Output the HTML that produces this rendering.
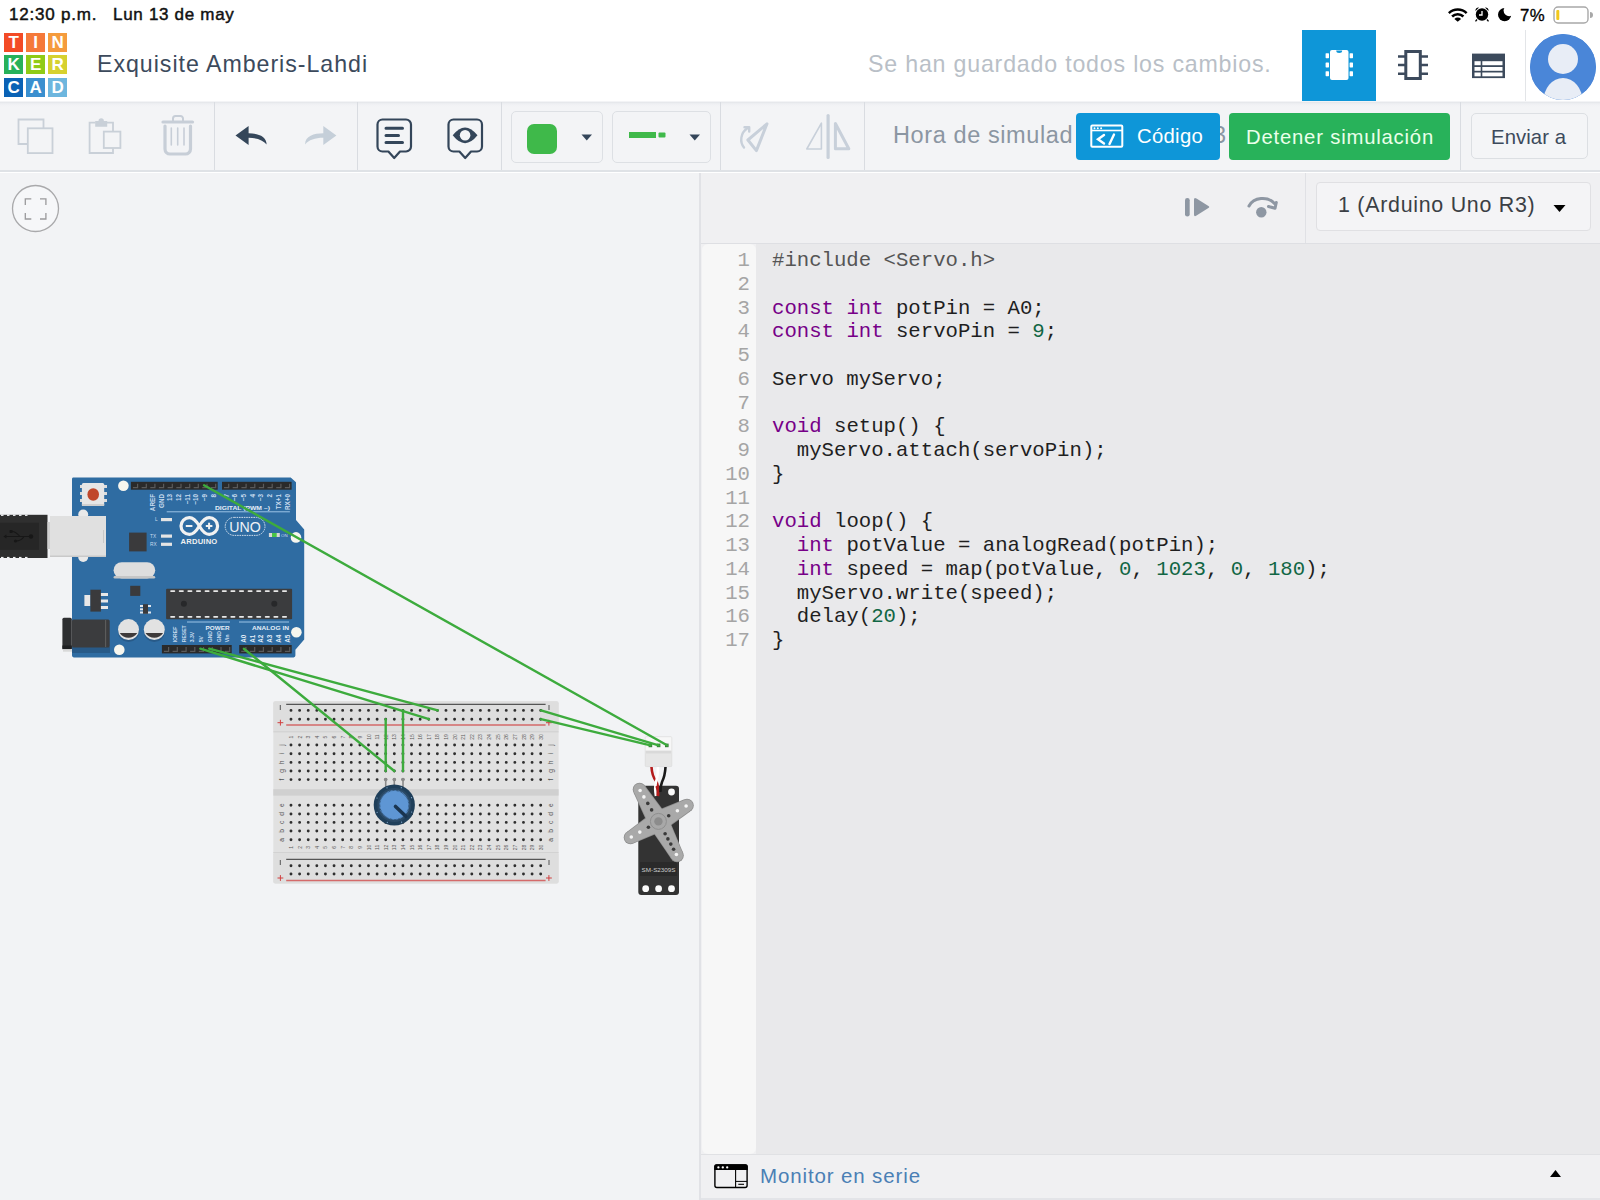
<!DOCTYPE html>
<html><head><meta charset="utf-8">
<style>
*{margin:0;padding:0;box-sizing:border-box}
html,body{width:1600px;height:1200px;overflow:hidden;background:#fff;font-family:"Liberation Sans",sans-serif}
.abs{position:absolute}
.t{line-height:1;white-space:pre}
#status{left:0;top:0;width:1600px;height:30px;background:#fff}
#header{left:0;top:30px;width:1600px;height:71px;background:#fff}
#toolbar{left:0;top:101px;width:1600px;height:70px;background:linear-gradient(#e3e5e9 0px,#eceef1 1.5px,#f1f2f5 3px,#f3f4f6 5px);border-top:1px solid transparent}
#tbline{left:0;top:170px;width:1600px;height:2px;background:#dfe2e6;border-bottom:1px solid #fff}
#tbline{height:3px}
#canvas{left:0;top:173px;width:700px;height:1028px;background:#f2f3f5}
#panel{left:699px;top:173px;width:901px;height:1028px;background:#f0f0f2;border-left:2px solid #e1e2e6}
.sep{position:absolute;width:1.3px;background:#d9dce1}
.logo{position:absolute;width:19.3px;height:19.3px;color:#fff;font-weight:bold;font-size:17px;line-height:19.3px;text-align:center}
.code{font-family:"Liberation Mono",monospace;font-size:20.67px;line-height:23.75px;color:#1f1f1f;white-space:pre}
.kw{color:#770088}
.num{color:#116644}
.meta{color:#555}
</style></head><body>
<div id="status" class="abs">
  <div class="abs t" id="st1" style="left:9px;top:6px;font-size:17px;color:#111;-webkit-text-stroke:0.45px #111;letter-spacing:0.8px">12:30 p.m.</div><div class="abs t" id="st2" style="left:113px;top:6px;font-size:17px;color:#111;-webkit-text-stroke:0.45px #111;letter-spacing:0.7px">Lun 13 de may</div>
</div>
<div id="header" class="abs">
  <div class="logo" style="left:4px;top:3px;background:#f34b26">T</div>
  <div class="logo" style="left:26px;top:3px;background:#f5793a">I</div>
  <div class="logo" style="left:48px;top:3px;background:#f59b3d">N</div>
  <div class="logo" style="left:4px;top:25px;background:#27b15a">K</div>
  <div class="logo" style="left:26px;top:25px;background:#8fcb16">E</div>
  <div class="logo" style="left:48px;top:25px;background:#d6d12f">R</div>
  <div class="logo" style="left:4px;top:48px;background:#0a62b5">C</div>
  <div class="logo" style="left:26px;top:48px;background:#3a8fcf">A</div>
  <div class="logo" style="left:48px;top:48px;background:#6db6de">D</div>
  <div class="abs t" style="left:97px;top:23px;font-size:23.2px;color:#3c4a5c;letter-spacing:0.97px">Exquisite Amberis-Lahdi</div>
  <div class="abs t" style="left:868px;top:23px;font-size:23.2px;color:#b9bfc7;letter-spacing:0.8px">Se han guardado todos los cambios.</div>
  <div class="abs" style="left:1302px;top:0;width:74px;height:71px;background:#0e96d8"></div>
  <div class="sep" style="left:1525px;top:0;height:71px;background:#e3e5e8"></div>
  <div class="abs" style="left:1530px;top:4px;width:66px;height:66px;border-radius:50%;background:#4a86d8"></div>
</div>
<div id="toolbar" class="abs">
  <div class="sep" style="left:214px;top:0;height:69px"></div>
  <div class="sep" style="left:357px;top:0;height:69px"></div>
  <div class="sep" style="left:501px;top:0;height:69px"></div>
  <div class="sep" style="left:720px;top:0;height:69px"></div>
  <div class="sep" style="left:864px;top:0;height:69px"></div>
  <div class="sep" style="left:1460px;top:0;height:69px"></div>
  <div class="abs" style="left:511px;top:9px;width:92px;height:52px;border:1px solid #dde0e4;border-radius:5px"></div>
  <div class="abs" style="left:612px;top:9px;width:99px;height:52px;border:1px solid #dde0e4;border-radius:5px"></div>
  <div class="abs" style="left:527px;top:22px;width:30px;height:30px;border-radius:7px;background:#3fb94a"></div>
  <div class="abs t" style="left:893px;top:22px;font-size:23.5px;color:#8b96a2;letter-spacing:0.6px">Hora de simulad</div>
  <div class="abs t" style="left:1213px;top:22px;font-size:23.5px;color:#8b96a2">3</div>
  <div class="abs" style="left:1075.5px;top:10.5px;width:144px;height:47px;border-radius:4px;background:#0e96d8"></div>
  <div class="abs t" style="left:1137px;top:24px;font-size:20.3px;color:#fff;letter-spacing:0.3px">Código</div>
  <div class="abs" style="left:1229px;top:11px;width:221px;height:46.5px;border-radius:4px;background:#28b25a"></div>
  <div class="abs t" style="left:1246px;top:24.5px;font-size:20.3px;color:#eaffea;letter-spacing:0.8px">Detener simulación</div>
  <div class="abs" style="left:1470.5px;top:11.2px;width:117.5px;height:46.3px;border-radius:5px;border:1px solid #dcdfe3;background:#f4f5f7"></div>
  <div class="abs t" style="left:1491px;top:24.5px;font-size:20.3px;color:#3c4a5c;letter-spacing:0.1px">Enviar a</div>
</div>
<div id="tbline" class="abs"></div>
<div id="canvas" class="abs">
</div>
<!--CIRCUIT--><svg class="abs" style="left:0;top:0" width="700" height="1200" viewBox="0 0 700 1200">
<path d="M73,477.4 H290.7 L296,482.2 V519.9 L304.2,529.5 V639.4 L295.4,649.7 V655.6 Q295.4,657.4 293.6,657.4 H73.8 Q72,657.4 72,655.6 V479 Q72,477.4 73,477.4 Z" fill="#2f6ca2"/>
<rect x="0" y="514.8" width="47.5" height="43.2" fill="#2f2f2f"/>
<rect x="1" y="514.6" width="2.5" height="1.3" fill="#f2f3f5"/>
<rect x="1" y="556.9" width="2.5" height="1.3" fill="#f2f3f5"/>
<rect x="7" y="514.6" width="2.5" height="1.3" fill="#f2f3f5"/>
<rect x="7" y="556.9" width="2.5" height="1.3" fill="#f2f3f5"/>
<rect x="13" y="514.6" width="2.5" height="1.3" fill="#f2f3f5"/>
<rect x="13" y="556.9" width="2.5" height="1.3" fill="#f2f3f5"/>
<rect x="19" y="514.6" width="2.5" height="1.3" fill="#f2f3f5"/>
<rect x="19" y="556.9" width="2.5" height="1.3" fill="#f2f3f5"/>
<rect x="25" y="514.6" width="2.5" height="1.3" fill="#f2f3f5"/>
<rect x="25" y="556.9" width="2.5" height="1.3" fill="#f2f3f5"/>
<rect x="0" y="522.8" width="39" height="27" fill="#262626"/>
<path d="M4,536.5 H31 M20,536.5 C17,533 15,531.5 12,531.5 M24,536.5 C22,540 19,541 15.5,541" stroke="#171717" stroke-width="1.1" fill="none"/>
<path d="M3.3,536.5 L6.5,534.6 V538.4 Z" fill="#171717"/><circle cx="31" cy="536.5" r="2.2" fill="#171717"/><rect x="9.5" y="529.9" width="3.2" height="3.2" rx="0.8" fill="#171717"/><circle cx="15.5" cy="541" r="1.6" fill="#171717"/>
<rect x="47.5" y="522" width="2.5" height="27" fill="#d0d0d0"/>
<circle cx="83.2" cy="514.6" r="5" fill="#e9e9e9"/><circle cx="83.2" cy="557" r="5" fill="#e9e9e9"/>
<rect x="50" y="516" width="56" height="41" fill="#e0e0e0"/>
<rect x="50" y="555.5" width="56" height="1.5" fill="#c9c9c9"/>
<rect x="103" y="530" width="1" height="13" fill="#c8c8c8"/>
<rect x="80" y="485" width="27" height="3" fill="#dcdcdc"/><rect x="80" y="492" width="27" height="3" fill="#dcdcdc"/><rect x="80" y="499" width="27" height="3" fill="#dcdcdc"/>
<rect x="81.9" y="483.1" width="22.3" height="22.8" rx="1.5" fill="#e6e6e6"/>
<rect x="81.9" y="504" width="22.3" height="2" fill="#cfcfcf"/>
<ellipse cx="93.2" cy="494.5" rx="5.8" ry="6.2" fill="#c0472a"/>
<circle cx="123.4" cy="485.8" r="5.3" fill="#f7f6ee"/>
<circle cx="296" cy="537.4" r="5.3" fill="#f7f6ee"/>
<circle cx="296.4" cy="632.3" r="5.3" fill="#f7f6ee"/>
<circle cx="119.3" cy="649.7" r="5.3" fill="#f7f6ee"/>
<rect x="130.9" y="481.8" width="86.79999999999998" height="7.899999999999977" fill="#2a2a2a"/>
<path d="M132.9,487.7 H137.6 V483.8" stroke="#5a5a5a" stroke-width="1.2" fill="none"/>
<path d="M141.6,487.7 H146.3 V483.8" stroke="#5a5a5a" stroke-width="1.2" fill="none"/>
<path d="M150.3,487.7 H154.9 V483.8" stroke="#5a5a5a" stroke-width="1.2" fill="none"/>
<path d="M158.9,487.7 H163.6 V483.8" stroke="#5a5a5a" stroke-width="1.2" fill="none"/>
<path d="M167.6,487.7 H172.3 V483.8" stroke="#5a5a5a" stroke-width="1.2" fill="none"/>
<path d="M176.3,487.7 H181.0 V483.8" stroke="#5a5a5a" stroke-width="1.2" fill="none"/>
<path d="M185.0,487.7 H189.7 V483.8" stroke="#5a5a5a" stroke-width="1.2" fill="none"/>
<path d="M193.7,487.7 H198.3 V483.8" stroke="#5a5a5a" stroke-width="1.2" fill="none"/>
<path d="M202.3,487.7 H207.0 V483.8" stroke="#5a5a5a" stroke-width="1.2" fill="none"/>
<path d="M211.0,487.7 H215.7 V483.8" stroke="#5a5a5a" stroke-width="1.2" fill="none"/>
<rect x="222" y="481.8" width="69.60000000000002" height="7.899999999999977" fill="#2a2a2a"/>
<path d="M224.0,487.7 H228.7 V483.8" stroke="#5a5a5a" stroke-width="1.2" fill="none"/>
<path d="M232.7,487.7 H237.4 V483.8" stroke="#5a5a5a" stroke-width="1.2" fill="none"/>
<path d="M241.4,487.7 H246.1 V483.8" stroke="#5a5a5a" stroke-width="1.2" fill="none"/>
<path d="M250.1,487.7 H254.8 V483.8" stroke="#5a5a5a" stroke-width="1.2" fill="none"/>
<path d="M258.8,487.7 H263.5 V483.8" stroke="#5a5a5a" stroke-width="1.2" fill="none"/>
<path d="M267.5,487.7 H272.2 V483.8" stroke="#5a5a5a" stroke-width="1.2" fill="none"/>
<path d="M276.2,487.7 H280.9 V483.8" stroke="#5a5a5a" stroke-width="1.2" fill="none"/>
<path d="M284.9,487.7 H289.6 V483.8" stroke="#5a5a5a" stroke-width="1.2" fill="none"/>
<rect x="161.9" y="645" width="69.79999999999998" height="8.399999999999977" fill="#2a2a2a"/>
<path d="M163.9,651.4 H168.6 V647.0" stroke="#5a5a5a" stroke-width="1.2" fill="none"/>
<path d="M172.6,651.4 H177.3 V647.0" stroke="#5a5a5a" stroke-width="1.2" fill="none"/>
<path d="M181.3,651.4 H186.1 V647.0" stroke="#5a5a5a" stroke-width="1.2" fill="none"/>
<path d="M190.1,651.4 H194.8 V647.0" stroke="#5a5a5a" stroke-width="1.2" fill="none"/>
<path d="M198.8,651.4 H203.5 V647.0" stroke="#5a5a5a" stroke-width="1.2" fill="none"/>
<path d="M207.5,651.4 H212.2 V647.0" stroke="#5a5a5a" stroke-width="1.2" fill="none"/>
<path d="M216.2,651.4 H221.0 V647.0" stroke="#5a5a5a" stroke-width="1.2" fill="none"/>
<path d="M225.0,651.4 H229.7 V647.0" stroke="#5a5a5a" stroke-width="1.2" fill="none"/>
<rect x="239.2" y="645" width="52.5" height="8.399999999999977" fill="#2a2a2a"/>
<path d="M241.2,651.4 H245.9 V647.0" stroke="#5a5a5a" stroke-width="1.2" fill="none"/>
<path d="M249.9,651.4 H254.7 V647.0" stroke="#5a5a5a" stroke-width="1.2" fill="none"/>
<path d="M258.7,651.4 H263.4 V647.0" stroke="#5a5a5a" stroke-width="1.2" fill="none"/>
<path d="M267.4,651.4 H272.2 V647.0" stroke="#5a5a5a" stroke-width="1.2" fill="none"/>
<path d="M276.2,651.4 H280.9 V647.0" stroke="#5a5a5a" stroke-width="1.2" fill="none"/>
<path d="M284.9,651.4 H289.7 V647.0" stroke="#5a5a5a" stroke-width="1.2" fill="none"/>
<path d="M166.7,511.8 H289.9" stroke="#9cc3e6" stroke-width="1"/>
<path d="M187,622 H230 M239,622 H289" stroke="#9cc3e6" stroke-width="1"/>
<text transform="translate(154.84,494) rotate(-90)" font-size="6.3" font-family="Liberation Sans" font-weight="bold" fill="#c9dcef" text-anchor="end">AREF</text>
<text transform="translate(163.51,494) rotate(-90)" font-size="6.3" font-family="Liberation Sans" font-weight="bold" fill="#c9dcef" text-anchor="end">GND</text>
<text transform="translate(172.18,494) rotate(-90)" font-size="6.3" font-family="Liberation Sans" font-weight="bold" fill="#c9dcef" text-anchor="end">13</text>
<text transform="translate(180.85,494) rotate(-90)" font-size="6.3" font-family="Liberation Sans" font-weight="bold" fill="#c9dcef" text-anchor="end">12</text>
<text transform="translate(189.51999999999998,494) rotate(-90)" font-size="6.3" font-family="Liberation Sans" font-weight="bold" fill="#c9dcef" text-anchor="end">~11</text>
<text transform="translate(198.19,494) rotate(-90)" font-size="6.3" font-family="Liberation Sans" font-weight="bold" fill="#c9dcef" text-anchor="end">~10</text>
<text transform="translate(206.86,494) rotate(-90)" font-size="6.3" font-family="Liberation Sans" font-weight="bold" fill="#c9dcef" text-anchor="end">~9</text>
<text transform="translate(215.53,494) rotate(-90)" font-size="6.3" font-family="Liberation Sans" font-weight="bold" fill="#c9dcef" text-anchor="end">8</text>
<text transform="translate(228.60000000000002,494) rotate(-90)" font-size="6.3" font-family="Liberation Sans" font-weight="bold" fill="#c9dcef" text-anchor="end">7</text>
<text transform="translate(237.3,494) rotate(-90)" font-size="6.3" font-family="Liberation Sans" font-weight="bold" fill="#c9dcef" text-anchor="end">~6</text>
<text transform="translate(246.00000000000003,494) rotate(-90)" font-size="6.3" font-family="Liberation Sans" font-weight="bold" fill="#c9dcef" text-anchor="end">~5</text>
<text transform="translate(254.70000000000002,494) rotate(-90)" font-size="6.3" font-family="Liberation Sans" font-weight="bold" fill="#c9dcef" text-anchor="end">4</text>
<text transform="translate(263.40000000000003,494) rotate(-90)" font-size="6.3" font-family="Liberation Sans" font-weight="bold" fill="#c9dcef" text-anchor="end">~3</text>
<text transform="translate(272.1,494) rotate(-90)" font-size="6.3" font-family="Liberation Sans" font-weight="bold" fill="#c9dcef" text-anchor="end">2</text>
<text transform="translate(280.8,494) rotate(-90)" font-size="6.3" font-family="Liberation Sans" font-weight="bold" fill="#c9dcef" text-anchor="end">TX+1</text>
<text transform="translate(289.5,494) rotate(-90)" font-size="6.3" font-family="Liberation Sans" font-weight="bold" fill="#c9dcef" text-anchor="end">RX+0</text>
<text x="215" y="509.5" font-size="6.2" font-family="Liberation Sans" font-weight="bold" fill="#e4eef8" textLength="55" lengthAdjust="spacingAndGlyphs">DIGITAL (PWM ~)</text>
<text x="205.6" y="629.8" font-size="5.8" font-family="Liberation Sans" font-weight="bold" fill="#e4eef8" textLength="24" lengthAdjust="spacingAndGlyphs">POWER</text>
<text x="252" y="629.8" font-size="5.8" font-family="Liberation Sans" font-weight="bold" fill="#e4eef8" textLength="37" lengthAdjust="spacingAndGlyphs">ANALOG IN</text>
<text transform="translate(177.02,642.3) rotate(-90)" font-size="5.1" font-family="Liberation Sans" font-weight="bold" fill="#c9dcef">IOREF</text>
<text transform="translate(185.74,642.3) rotate(-90)" font-size="5.1" font-family="Liberation Sans" font-weight="bold" fill="#c9dcef">RESET</text>
<text transform="translate(194.46,642.3) rotate(-90)" font-size="5.1" font-family="Liberation Sans" font-weight="bold" fill="#c9dcef">3.3V</text>
<text transform="translate(203.18,642.3) rotate(-90)" font-size="5.1" font-family="Liberation Sans" font-weight="bold" fill="#c9dcef">5V</text>
<text transform="translate(211.9,642.3) rotate(-90)" font-size="5.1" font-family="Liberation Sans" font-weight="bold" fill="#c9dcef">GND</text>
<text transform="translate(220.62,642.3) rotate(-90)" font-size="5.1" font-family="Liberation Sans" font-weight="bold" fill="#c9dcef">GND</text>
<text transform="translate(229.34000000000003,642.3) rotate(-90)" font-size="5.1" font-family="Liberation Sans" font-weight="bold" fill="#c9dcef">Vin</text>
<text transform="translate(246.0,642.8) rotate(-90)" font-size="6.3" font-family="Liberation Sans" font-weight="bold" fill="#e4eef8">A0</text>
<text transform="translate(254.7,642.8) rotate(-90)" font-size="6.3" font-family="Liberation Sans" font-weight="bold" fill="#e4eef8">A1</text>
<text transform="translate(263.4,642.8) rotate(-90)" font-size="6.3" font-family="Liberation Sans" font-weight="bold" fill="#e4eef8">A2</text>
<text transform="translate(272.09999999999997,642.8) rotate(-90)" font-size="6.3" font-family="Liberation Sans" font-weight="bold" fill="#e4eef8">A3</text>
<text transform="translate(280.79999999999995,642.8) rotate(-90)" font-size="6.3" font-family="Liberation Sans" font-weight="bold" fill="#e4eef8">A4</text>
<text transform="translate(289.5,642.8) rotate(-90)" font-size="6.3" font-family="Liberation Sans" font-weight="bold" fill="#e4eef8">A5</text>
<rect x="161" y="518" width="11" height="3.2" fill="#e4e4e4"/>
<text x="155" y="521.3" font-size="4.8" font-family="Liberation Sans" fill="#c9dcef">L</text>
<rect x="161" y="534.5" width="11" height="3.2" fill="#e4e4e4"/>
<text x="150" y="537.8" font-size="4.8" font-family="Liberation Sans" fill="#c9dcef">TX</text>
<rect x="161" y="542.7" width="11" height="3.2" fill="#e4e4e4"/>
<text x="150" y="546.0" font-size="4.8" font-family="Liberation Sans" fill="#c9dcef">RX</text>
<rect x="268.9" y="533" width="10.9" height="4" fill="#d8d8d8"/><rect x="272" y="533" width="4.7" height="4" fill="#48c548"/>
<text x="281" y="537" font-size="4.4" font-family="Liberation Sans" fill="#c9dcef">ON</text>
<rect x="129.1" y="532.6" width="17.5" height="18.8" fill="#3a3a3c"/>
<rect x="130.2" y="585.8" width="10.1" height="10.1" fill="#3a3a3c"/>
<rect x="113.6" y="562.2" width="41.6" height="16.2" rx="8.1" fill="#dedede"/>
<rect x="113.6" y="576" width="41.6" height="2.4" rx="1.2" fill="#c6c6c6"/>
<rect x="84.4" y="595" width="6" height="11" fill="#e8e8e8"/>
<rect x="100" y="593" width="8" height="3" fill="#e8e8e8"/><rect x="100" y="599.5" width="8" height="3" fill="#e8e8e8"/><rect x="100" y="606" width="8" height="3" fill="#e8e8e8"/>
<rect x="90.4" y="589.7" width="10.5" height="21.9" fill="#3a3a3c"/>
<rect x="140" y="605" width="11" height="2" fill="#e0e6ee"/><rect x="140" y="608.3" width="3" height="2" fill="#e0e6ee"/><rect x="140" y="611.5" width="11" height="2" fill="#e0e6ee"/>
<rect x="143" y="604.2" width="5" height="9.6" fill="#3a3a3c"/>
<rect x="166.1" y="588.7" width="126" height="30.5" rx="1" fill="#3b3c3e"/>
<rect x="170.2" y="590.3" width="5" height="1.7" rx="0.8" fill="#e8e8e8"/>
<rect x="170.2" y="616" width="5" height="1.7" rx="0.8" fill="#e8e8e8"/>
<rect x="178.8" y="590.3" width="5" height="1.7" rx="0.8" fill="#e8e8e8"/>
<rect x="178.8" y="616" width="5" height="1.7" rx="0.8" fill="#e8e8e8"/>
<rect x="187.4" y="590.3" width="5" height="1.7" rx="0.8" fill="#e8e8e8"/>
<rect x="187.4" y="616" width="5" height="1.7" rx="0.8" fill="#e8e8e8"/>
<rect x="196.0" y="590.3" width="5" height="1.7" rx="0.8" fill="#e8e8e8"/>
<rect x="196.0" y="616" width="5" height="1.7" rx="0.8" fill="#e8e8e8"/>
<rect x="204.6" y="590.3" width="5" height="1.7" rx="0.8" fill="#e8e8e8"/>
<rect x="204.6" y="616" width="5" height="1.7" rx="0.8" fill="#e8e8e8"/>
<rect x="213.2" y="590.3" width="5" height="1.7" rx="0.8" fill="#e8e8e8"/>
<rect x="213.2" y="616" width="5" height="1.7" rx="0.8" fill="#e8e8e8"/>
<rect x="221.8" y="590.3" width="5" height="1.7" rx="0.8" fill="#e8e8e8"/>
<rect x="221.8" y="616" width="5" height="1.7" rx="0.8" fill="#e8e8e8"/>
<rect x="230.4" y="590.3" width="5" height="1.7" rx="0.8" fill="#e8e8e8"/>
<rect x="230.4" y="616" width="5" height="1.7" rx="0.8" fill="#e8e8e8"/>
<rect x="239.0" y="590.3" width="5" height="1.7" rx="0.8" fill="#e8e8e8"/>
<rect x="239.0" y="616" width="5" height="1.7" rx="0.8" fill="#e8e8e8"/>
<rect x="247.6" y="590.3" width="5" height="1.7" rx="0.8" fill="#e8e8e8"/>
<rect x="247.6" y="616" width="5" height="1.7" rx="0.8" fill="#e8e8e8"/>
<rect x="256.2" y="590.3" width="5" height="1.7" rx="0.8" fill="#e8e8e8"/>
<rect x="256.2" y="616" width="5" height="1.7" rx="0.8" fill="#e8e8e8"/>
<rect x="264.8" y="590.3" width="5" height="1.7" rx="0.8" fill="#e8e8e8"/>
<rect x="264.8" y="616" width="5" height="1.7" rx="0.8" fill="#e8e8e8"/>
<rect x="273.4" y="590.3" width="5" height="1.7" rx="0.8" fill="#e8e8e8"/>
<rect x="273.4" y="616" width="5" height="1.7" rx="0.8" fill="#e8e8e8"/>
<rect x="282.0" y="590.3" width="5" height="1.7" rx="0.8" fill="#e8e8e8"/>
<rect x="282.0" y="616" width="5" height="1.7" rx="0.8" fill="#e8e8e8"/>
<circle cx="183.9" cy="603.7" r="3" fill="#27282a"/><circle cx="274.3" cy="603.7" r="3" fill="#27282a"/>
<rect x="72" y="647" width="38" height="6" fill="#285a88"/>
<rect x="72" y="619.5" width="37.7" height="28" rx="1.5" fill="#3b3c3e"/>
<rect x="105.3" y="620" width="0.8" height="27" fill="#6a6a6a"/>
<rect x="62.4" y="617.7" width="9.4" height="31.5" rx="1.5" fill="#2e2f31"/>
<rect x="62.4" y="645.5" width="9.4" height="3.7" fill="#1f2022"/>
<rect x="63" y="649.2" width="9" height="2.5" fill="#d9d9d9"/>
<circle cx="128.5" cy="631.5" r="10.5" fill="#285a88"/>
<circle cx="128.5" cy="629.6" r="10.5" fill="#e2e2e2"/>
<path d="M119.7,633 H137.3 A10.5,10.5 0 0 1 119.7,633 Z" fill="#3e3a3a"/>
<circle cx="154.3" cy="631.5" r="10.5" fill="#285a88"/>
<circle cx="154.3" cy="629.6" r="10.5" fill="#e2e2e2"/>
<path d="M145.5,633 H163.10000000000002 A10.5,10.5 0 0 1 145.5,633 Z" fill="#3e3a3a"/>
<g fill="none" stroke="#f2f2f2" stroke-width="3.2">
<path d="M199.3,526 C195.5,519.5 191.5,517.6 189.4,517.6 A8.4,8.4 0 0 0 189.4,534.4 C191.5,534.4 195.5,532.5 199.3,526 C203.1,519.5 207.1,517.6 209.2,517.6 A8.4,8.4 0 0 1 209.2,534.4 C207.1,534.4 203.1,532.5 199.3,526 Z"/>
</g>
<path d="M185.8,526 H192.4 M205.8,526 H212.4 M209.1,522.7 V529.3" stroke="#f2f2f2" stroke-width="2"/>
<text x="180.6" y="544" font-size="7.6" font-family="Liberation Sans" font-weight="bold" fill="#f0f0f0" letter-spacing="0.2">ARDUINO</text>
<rect x="225.2" y="517.4" width="39.8" height="18" rx="9" fill="none" stroke="#dfe8f2" stroke-width="0.9" stroke-dasharray="1.6,0.8"/>
<text x="229.3" y="532.4" font-size="14.2" font-family="Liberation Sans" fill="#eef2f6" textLength="31.5" lengthAdjust="spacingAndGlyphs">UNO</text>
<rect x="273.3" y="701.2" width="285.3" height="182.39999999999998" rx="2" fill="#e1e1e1"/>
<rect x="273.3" y="701.2" width="285.3" height="30.5" rx="2" fill="#dedede"/>
<rect x="273.3" y="731.2" width="285.3" height="1.2" fill="#d2d2d2"/>
<rect x="273.3" y="789.2" width="285.3" height="6.4" fill="#d0d0d0"/>
<rect x="273.3" y="852.4" width="285.3" height="31.2" rx="2" fill="#dedede"/>
<rect x="273.3" y="852" width="285.3" height="1" fill="#d2d2d2"/>
<path d="M286.2,704.3 H545.6 M286.2,859.3 H545.6" stroke="#555" stroke-width="1.2"/>
<path d="M286.2,725 H545.6 M286.2,880.4 H545.6" stroke="#d46a6a" stroke-width="1.5"/>
<path d="M280.3,705 V710 M549,705 V710 M280.3,860 V865 M549,860 V865" stroke="#555" stroke-width="1"/>
<path d="M277.5,722.7 H283.3 M280.4,719.8 V725.6 M546,722.7 H551.8 M548.9,719.8 V725.6 M277.5,878 H283.3 M280.4,875.1 V880.9 M546,878 H551.8 M548.9,875.1 V880.9" stroke="#d04040" stroke-width="1"/>
<path d="M291.00,710.4h0M299.61,710.4h0M308.22,710.4h0M316.83,710.4h0M325.44,710.4h0M334.05,710.4h0M342.66,710.4h0M351.27,710.4h0M359.88,710.4h0M368.49,710.4h0M377.10,710.4h0M385.71,710.4h0M394.32,710.4h0M402.93,710.4h0M411.54,710.4h0M420.15,710.4h0M428.76,710.4h0M437.37,710.4h0M445.98,710.4h0M454.59,710.4h0M463.20,710.4h0M471.81,710.4h0M480.42,710.4h0M489.03,710.4h0M497.64,710.4h0M506.25,710.4h0M514.86,710.4h0M523.47,710.4h0M532.08,710.4h0M540.69,710.4h0M291.00,719.2h0M299.61,719.2h0M308.22,719.2h0M316.83,719.2h0M325.44,719.2h0M334.05,719.2h0M342.66,719.2h0M351.27,719.2h0M359.88,719.2h0M368.49,719.2h0M377.10,719.2h0M385.71,719.2h0M394.32,719.2h0M402.93,719.2h0M411.54,719.2h0M420.15,719.2h0M428.76,719.2h0M437.37,719.2h0M445.98,719.2h0M454.59,719.2h0M463.20,719.2h0M471.81,719.2h0M480.42,719.2h0M489.03,719.2h0M497.64,719.2h0M506.25,719.2h0M514.86,719.2h0M523.47,719.2h0M532.08,719.2h0M540.69,719.2h0M291.00,745h0M299.61,745h0M308.22,745h0M316.83,745h0M325.44,745h0M334.05,745h0M342.66,745h0M351.27,745h0M359.88,745h0M368.49,745h0M377.10,745h0M385.71,745h0M394.32,745h0M402.93,745h0M411.54,745h0M420.15,745h0M428.76,745h0M437.37,745h0M445.98,745h0M454.59,745h0M463.20,745h0M471.81,745h0M480.42,745h0M489.03,745h0M497.64,745h0M506.25,745h0M514.86,745h0M523.47,745h0M532.08,745h0M540.69,745h0M291.00,753.7h0M299.61,753.7h0M308.22,753.7h0M316.83,753.7h0M325.44,753.7h0M334.05,753.7h0M342.66,753.7h0M351.27,753.7h0M359.88,753.7h0M368.49,753.7h0M377.10,753.7h0M385.71,753.7h0M394.32,753.7h0M402.93,753.7h0M411.54,753.7h0M420.15,753.7h0M428.76,753.7h0M437.37,753.7h0M445.98,753.7h0M454.59,753.7h0M463.20,753.7h0M471.81,753.7h0M480.42,753.7h0M489.03,753.7h0M497.64,753.7h0M506.25,753.7h0M514.86,753.7h0M523.47,753.7h0M532.08,753.7h0M540.69,753.7h0M291.00,762.4h0M299.61,762.4h0M308.22,762.4h0M316.83,762.4h0M325.44,762.4h0M334.05,762.4h0M342.66,762.4h0M351.27,762.4h0M359.88,762.4h0M368.49,762.4h0M377.10,762.4h0M385.71,762.4h0M394.32,762.4h0M402.93,762.4h0M411.54,762.4h0M420.15,762.4h0M428.76,762.4h0M437.37,762.4h0M445.98,762.4h0M454.59,762.4h0M463.20,762.4h0M471.81,762.4h0M480.42,762.4h0M489.03,762.4h0M497.64,762.4h0M506.25,762.4h0M514.86,762.4h0M523.47,762.4h0M532.08,762.4h0M540.69,762.4h0M291.00,771h0M299.61,771h0M308.22,771h0M316.83,771h0M325.44,771h0M334.05,771h0M342.66,771h0M351.27,771h0M359.88,771h0M368.49,771h0M377.10,771h0M385.71,771h0M394.32,771h0M402.93,771h0M411.54,771h0M420.15,771h0M428.76,771h0M437.37,771h0M445.98,771h0M454.59,771h0M463.20,771h0M471.81,771h0M480.42,771h0M489.03,771h0M497.64,771h0M506.25,771h0M514.86,771h0M523.47,771h0M532.08,771h0M540.69,771h0M291.00,779.6h0M299.61,779.6h0M308.22,779.6h0M316.83,779.6h0M325.44,779.6h0M334.05,779.6h0M342.66,779.6h0M351.27,779.6h0M359.88,779.6h0M368.49,779.6h0M377.10,779.6h0M385.71,779.6h0M394.32,779.6h0M402.93,779.6h0M411.54,779.6h0M420.15,779.6h0M428.76,779.6h0M437.37,779.6h0M445.98,779.6h0M454.59,779.6h0M463.20,779.6h0M471.81,779.6h0M480.42,779.6h0M489.03,779.6h0M497.64,779.6h0M506.25,779.6h0M514.86,779.6h0M523.47,779.6h0M532.08,779.6h0M540.69,779.6h0M291.00,805.2h0M299.61,805.2h0M308.22,805.2h0M316.83,805.2h0M325.44,805.2h0M334.05,805.2h0M342.66,805.2h0M351.27,805.2h0M359.88,805.2h0M368.49,805.2h0M377.10,805.2h0M385.71,805.2h0M394.32,805.2h0M402.93,805.2h0M411.54,805.2h0M420.15,805.2h0M428.76,805.2h0M437.37,805.2h0M445.98,805.2h0M454.59,805.2h0M463.20,805.2h0M471.81,805.2h0M480.42,805.2h0M489.03,805.2h0M497.64,805.2h0M506.25,805.2h0M514.86,805.2h0M523.47,805.2h0M532.08,805.2h0M540.69,805.2h0M291.00,814h0M299.61,814h0M308.22,814h0M316.83,814h0M325.44,814h0M334.05,814h0M342.66,814h0M351.27,814h0M359.88,814h0M368.49,814h0M377.10,814h0M385.71,814h0M394.32,814h0M402.93,814h0M411.54,814h0M420.15,814h0M428.76,814h0M437.37,814h0M445.98,814h0M454.59,814h0M463.20,814h0M471.81,814h0M480.42,814h0M489.03,814h0M497.64,814h0M506.25,814h0M514.86,814h0M523.47,814h0M532.08,814h0M540.69,814h0M291.00,822.4h0M299.61,822.4h0M308.22,822.4h0M316.83,822.4h0M325.44,822.4h0M334.05,822.4h0M342.66,822.4h0M351.27,822.4h0M359.88,822.4h0M368.49,822.4h0M377.10,822.4h0M385.71,822.4h0M394.32,822.4h0M402.93,822.4h0M411.54,822.4h0M420.15,822.4h0M428.76,822.4h0M437.37,822.4h0M445.98,822.4h0M454.59,822.4h0M463.20,822.4h0M471.81,822.4h0M480.42,822.4h0M489.03,822.4h0M497.64,822.4h0M506.25,822.4h0M514.86,822.4h0M523.47,822.4h0M532.08,822.4h0M540.69,822.4h0M291.00,831h0M299.61,831h0M308.22,831h0M316.83,831h0M325.44,831h0M334.05,831h0M342.66,831h0M351.27,831h0M359.88,831h0M368.49,831h0M377.10,831h0M385.71,831h0M394.32,831h0M402.93,831h0M411.54,831h0M420.15,831h0M428.76,831h0M437.37,831h0M445.98,831h0M454.59,831h0M463.20,831h0M471.81,831h0M480.42,831h0M489.03,831h0M497.64,831h0M506.25,831h0M514.86,831h0M523.47,831h0M532.08,831h0M540.69,831h0M291.00,839.8h0M299.61,839.8h0M308.22,839.8h0M316.83,839.8h0M325.44,839.8h0M334.05,839.8h0M342.66,839.8h0M351.27,839.8h0M359.88,839.8h0M368.49,839.8h0M377.10,839.8h0M385.71,839.8h0M394.32,839.8h0M402.93,839.8h0M411.54,839.8h0M420.15,839.8h0M428.76,839.8h0M437.37,839.8h0M445.98,839.8h0M454.59,839.8h0M463.20,839.8h0M471.81,839.8h0M480.42,839.8h0M489.03,839.8h0M497.64,839.8h0M506.25,839.8h0M514.86,839.8h0M523.47,839.8h0M532.08,839.8h0M540.69,839.8h0M291.00,865.7h0M299.61,865.7h0M308.22,865.7h0M316.83,865.7h0M325.44,865.7h0M334.05,865.7h0M342.66,865.7h0M351.27,865.7h0M359.88,865.7h0M368.49,865.7h0M377.10,865.7h0M385.71,865.7h0M394.32,865.7h0M402.93,865.7h0M411.54,865.7h0M420.15,865.7h0M428.76,865.7h0M437.37,865.7h0M445.98,865.7h0M454.59,865.7h0M463.20,865.7h0M471.81,865.7h0M480.42,865.7h0M489.03,865.7h0M497.64,865.7h0M506.25,865.7h0M514.86,865.7h0M523.47,865.7h0M532.08,865.7h0M540.69,865.7h0M291.00,874h0M299.61,874h0M308.22,874h0M316.83,874h0M325.44,874h0M334.05,874h0M342.66,874h0M351.27,874h0M359.88,874h0M368.49,874h0M377.10,874h0M385.71,874h0M394.32,874h0M402.93,874h0M411.54,874h0M420.15,874h0M428.76,874h0M437.37,874h0M445.98,874h0M454.59,874h0M463.20,874h0M471.81,874h0M480.42,874h0M489.03,874h0M497.64,874h0M506.25,874h0M514.86,874h0M523.47,874h0M532.08,874h0M540.69,874h0" stroke="#2e2e2e" stroke-width="2.9" stroke-linecap="round"/>
<text transform="translate(291.0,737) rotate(-90)" font-size="5" font-family="Liberation Sans" fill="#5a5a5a" text-anchor="middle" dominant-baseline="central">1</text>
<text transform="translate(291.0,847.4) rotate(-90)" font-size="5" font-family="Liberation Sans" fill="#5a5a5a" text-anchor="middle" dominant-baseline="central">1</text>
<text transform="translate(299.6,737) rotate(-90)" font-size="5" font-family="Liberation Sans" fill="#5a5a5a" text-anchor="middle" dominant-baseline="central">2</text>
<text transform="translate(299.6,847.4) rotate(-90)" font-size="5" font-family="Liberation Sans" fill="#5a5a5a" text-anchor="middle" dominant-baseline="central">2</text>
<text transform="translate(308.2,737) rotate(-90)" font-size="5" font-family="Liberation Sans" fill="#5a5a5a" text-anchor="middle" dominant-baseline="central">3</text>
<text transform="translate(308.2,847.4) rotate(-90)" font-size="5" font-family="Liberation Sans" fill="#5a5a5a" text-anchor="middle" dominant-baseline="central">3</text>
<text transform="translate(316.8,737) rotate(-90)" font-size="5" font-family="Liberation Sans" fill="#5a5a5a" text-anchor="middle" dominant-baseline="central">4</text>
<text transform="translate(316.8,847.4) rotate(-90)" font-size="5" font-family="Liberation Sans" fill="#5a5a5a" text-anchor="middle" dominant-baseline="central">4</text>
<text transform="translate(325.4,737) rotate(-90)" font-size="5" font-family="Liberation Sans" fill="#5a5a5a" text-anchor="middle" dominant-baseline="central">5</text>
<text transform="translate(325.4,847.4) rotate(-90)" font-size="5" font-family="Liberation Sans" fill="#5a5a5a" text-anchor="middle" dominant-baseline="central">5</text>
<text transform="translate(334.1,737) rotate(-90)" font-size="5" font-family="Liberation Sans" fill="#5a5a5a" text-anchor="middle" dominant-baseline="central">6</text>
<text transform="translate(334.1,847.4) rotate(-90)" font-size="5" font-family="Liberation Sans" fill="#5a5a5a" text-anchor="middle" dominant-baseline="central">6</text>
<text transform="translate(342.7,737) rotate(-90)" font-size="5" font-family="Liberation Sans" fill="#5a5a5a" text-anchor="middle" dominant-baseline="central">7</text>
<text transform="translate(342.7,847.4) rotate(-90)" font-size="5" font-family="Liberation Sans" fill="#5a5a5a" text-anchor="middle" dominant-baseline="central">7</text>
<text transform="translate(351.3,737) rotate(-90)" font-size="5" font-family="Liberation Sans" fill="#5a5a5a" text-anchor="middle" dominant-baseline="central">8</text>
<text transform="translate(351.3,847.4) rotate(-90)" font-size="5" font-family="Liberation Sans" fill="#5a5a5a" text-anchor="middle" dominant-baseline="central">8</text>
<text transform="translate(359.9,737) rotate(-90)" font-size="5" font-family="Liberation Sans" fill="#5a5a5a" text-anchor="middle" dominant-baseline="central">9</text>
<text transform="translate(359.9,847.4) rotate(-90)" font-size="5" font-family="Liberation Sans" fill="#5a5a5a" text-anchor="middle" dominant-baseline="central">9</text>
<text transform="translate(368.5,737) rotate(-90)" font-size="5" font-family="Liberation Sans" fill="#5a5a5a" text-anchor="middle" dominant-baseline="central">10</text>
<text transform="translate(368.5,847.4) rotate(-90)" font-size="5" font-family="Liberation Sans" fill="#5a5a5a" text-anchor="middle" dominant-baseline="central">10</text>
<text transform="translate(377.1,737) rotate(-90)" font-size="5" font-family="Liberation Sans" fill="#5a5a5a" text-anchor="middle" dominant-baseline="central">11</text>
<text transform="translate(377.1,847.4) rotate(-90)" font-size="5" font-family="Liberation Sans" fill="#5a5a5a" text-anchor="middle" dominant-baseline="central">11</text>
<text transform="translate(385.7,737) rotate(-90)" font-size="5" font-family="Liberation Sans" fill="#5a5a5a" text-anchor="middle" dominant-baseline="central">12</text>
<text transform="translate(385.7,847.4) rotate(-90)" font-size="5" font-family="Liberation Sans" fill="#5a5a5a" text-anchor="middle" dominant-baseline="central">12</text>
<text transform="translate(394.3,737) rotate(-90)" font-size="5" font-family="Liberation Sans" fill="#5a5a5a" text-anchor="middle" dominant-baseline="central">13</text>
<text transform="translate(394.3,847.4) rotate(-90)" font-size="5" font-family="Liberation Sans" fill="#5a5a5a" text-anchor="middle" dominant-baseline="central">13</text>
<text transform="translate(402.9,737) rotate(-90)" font-size="5" font-family="Liberation Sans" fill="#5a5a5a" text-anchor="middle" dominant-baseline="central">14</text>
<text transform="translate(402.9,847.4) rotate(-90)" font-size="5" font-family="Liberation Sans" fill="#5a5a5a" text-anchor="middle" dominant-baseline="central">14</text>
<text transform="translate(411.5,737) rotate(-90)" font-size="5" font-family="Liberation Sans" fill="#5a5a5a" text-anchor="middle" dominant-baseline="central">15</text>
<text transform="translate(411.5,847.4) rotate(-90)" font-size="5" font-family="Liberation Sans" fill="#5a5a5a" text-anchor="middle" dominant-baseline="central">15</text>
<text transform="translate(420.1,737) rotate(-90)" font-size="5" font-family="Liberation Sans" fill="#5a5a5a" text-anchor="middle" dominant-baseline="central">16</text>
<text transform="translate(420.1,847.4) rotate(-90)" font-size="5" font-family="Liberation Sans" fill="#5a5a5a" text-anchor="middle" dominant-baseline="central">16</text>
<text transform="translate(428.8,737) rotate(-90)" font-size="5" font-family="Liberation Sans" fill="#5a5a5a" text-anchor="middle" dominant-baseline="central">17</text>
<text transform="translate(428.8,847.4) rotate(-90)" font-size="5" font-family="Liberation Sans" fill="#5a5a5a" text-anchor="middle" dominant-baseline="central">17</text>
<text transform="translate(437.4,737) rotate(-90)" font-size="5" font-family="Liberation Sans" fill="#5a5a5a" text-anchor="middle" dominant-baseline="central">18</text>
<text transform="translate(437.4,847.4) rotate(-90)" font-size="5" font-family="Liberation Sans" fill="#5a5a5a" text-anchor="middle" dominant-baseline="central">18</text>
<text transform="translate(446.0,737) rotate(-90)" font-size="5" font-family="Liberation Sans" fill="#5a5a5a" text-anchor="middle" dominant-baseline="central">19</text>
<text transform="translate(446.0,847.4) rotate(-90)" font-size="5" font-family="Liberation Sans" fill="#5a5a5a" text-anchor="middle" dominant-baseline="central">19</text>
<text transform="translate(454.6,737) rotate(-90)" font-size="5" font-family="Liberation Sans" fill="#5a5a5a" text-anchor="middle" dominant-baseline="central">20</text>
<text transform="translate(454.6,847.4) rotate(-90)" font-size="5" font-family="Liberation Sans" fill="#5a5a5a" text-anchor="middle" dominant-baseline="central">20</text>
<text transform="translate(463.2,737) rotate(-90)" font-size="5" font-family="Liberation Sans" fill="#5a5a5a" text-anchor="middle" dominant-baseline="central">21</text>
<text transform="translate(463.2,847.4) rotate(-90)" font-size="5" font-family="Liberation Sans" fill="#5a5a5a" text-anchor="middle" dominant-baseline="central">21</text>
<text transform="translate(471.8,737) rotate(-90)" font-size="5" font-family="Liberation Sans" fill="#5a5a5a" text-anchor="middle" dominant-baseline="central">22</text>
<text transform="translate(471.8,847.4) rotate(-90)" font-size="5" font-family="Liberation Sans" fill="#5a5a5a" text-anchor="middle" dominant-baseline="central">22</text>
<text transform="translate(480.4,737) rotate(-90)" font-size="5" font-family="Liberation Sans" fill="#5a5a5a" text-anchor="middle" dominant-baseline="central">23</text>
<text transform="translate(480.4,847.4) rotate(-90)" font-size="5" font-family="Liberation Sans" fill="#5a5a5a" text-anchor="middle" dominant-baseline="central">23</text>
<text transform="translate(489.0,737) rotate(-90)" font-size="5" font-family="Liberation Sans" fill="#5a5a5a" text-anchor="middle" dominant-baseline="central">24</text>
<text transform="translate(489.0,847.4) rotate(-90)" font-size="5" font-family="Liberation Sans" fill="#5a5a5a" text-anchor="middle" dominant-baseline="central">24</text>
<text transform="translate(497.6,737) rotate(-90)" font-size="5" font-family="Liberation Sans" fill="#5a5a5a" text-anchor="middle" dominant-baseline="central">25</text>
<text transform="translate(497.6,847.4) rotate(-90)" font-size="5" font-family="Liberation Sans" fill="#5a5a5a" text-anchor="middle" dominant-baseline="central">25</text>
<text transform="translate(506.2,737) rotate(-90)" font-size="5" font-family="Liberation Sans" fill="#5a5a5a" text-anchor="middle" dominant-baseline="central">26</text>
<text transform="translate(506.2,847.4) rotate(-90)" font-size="5" font-family="Liberation Sans" fill="#5a5a5a" text-anchor="middle" dominant-baseline="central">26</text>
<text transform="translate(514.9,737) rotate(-90)" font-size="5" font-family="Liberation Sans" fill="#5a5a5a" text-anchor="middle" dominant-baseline="central">27</text>
<text transform="translate(514.9,847.4) rotate(-90)" font-size="5" font-family="Liberation Sans" fill="#5a5a5a" text-anchor="middle" dominant-baseline="central">27</text>
<text transform="translate(523.5,737) rotate(-90)" font-size="5" font-family="Liberation Sans" fill="#5a5a5a" text-anchor="middle" dominant-baseline="central">28</text>
<text transform="translate(523.5,847.4) rotate(-90)" font-size="5" font-family="Liberation Sans" fill="#5a5a5a" text-anchor="middle" dominant-baseline="central">28</text>
<text transform="translate(532.1,737) rotate(-90)" font-size="5" font-family="Liberation Sans" fill="#5a5a5a" text-anchor="middle" dominant-baseline="central">29</text>
<text transform="translate(532.1,847.4) rotate(-90)" font-size="5" font-family="Liberation Sans" fill="#5a5a5a" text-anchor="middle" dominant-baseline="central">29</text>
<text transform="translate(540.7,737) rotate(-90)" font-size="5" font-family="Liberation Sans" fill="#5a5a5a" text-anchor="middle" dominant-baseline="central">30</text>
<text transform="translate(540.7,847.4) rotate(-90)" font-size="5" font-family="Liberation Sans" fill="#5a5a5a" text-anchor="middle" dominant-baseline="central">30</text>
<text transform="translate(281.7,745) rotate(-90)" font-size="6.6" font-family="Liberation Sans" fill="#555" text-anchor="middle" dominant-baseline="central">j</text>
<text transform="translate(550.5,745) rotate(-90)" font-size="6.6" font-family="Liberation Sans" fill="#555" text-anchor="middle" dominant-baseline="central">j</text>
<text transform="translate(281.7,753.7) rotate(-90)" font-size="6.6" font-family="Liberation Sans" fill="#555" text-anchor="middle" dominant-baseline="central">i</text>
<text transform="translate(550.5,753.7) rotate(-90)" font-size="6.6" font-family="Liberation Sans" fill="#555" text-anchor="middle" dominant-baseline="central">i</text>
<text transform="translate(281.7,762.4) rotate(-90)" font-size="6.6" font-family="Liberation Sans" fill="#555" text-anchor="middle" dominant-baseline="central">h</text>
<text transform="translate(550.5,762.4) rotate(-90)" font-size="6.6" font-family="Liberation Sans" fill="#555" text-anchor="middle" dominant-baseline="central">h</text>
<text transform="translate(281.7,771) rotate(-90)" font-size="6.6" font-family="Liberation Sans" fill="#555" text-anchor="middle" dominant-baseline="central">g</text>
<text transform="translate(550.5,771) rotate(-90)" font-size="6.6" font-family="Liberation Sans" fill="#555" text-anchor="middle" dominant-baseline="central">g</text>
<text transform="translate(281.7,779.6) rotate(-90)" font-size="6.6" font-family="Liberation Sans" fill="#555" text-anchor="middle" dominant-baseline="central">f</text>
<text transform="translate(550.5,779.6) rotate(-90)" font-size="6.6" font-family="Liberation Sans" fill="#555" text-anchor="middle" dominant-baseline="central">f</text>
<text transform="translate(281.7,805.2) rotate(-90)" font-size="6.6" font-family="Liberation Sans" fill="#555" text-anchor="middle" dominant-baseline="central">e</text>
<text transform="translate(550.5,805.2) rotate(-90)" font-size="6.6" font-family="Liberation Sans" fill="#555" text-anchor="middle" dominant-baseline="central">e</text>
<text transform="translate(281.7,814) rotate(-90)" font-size="6.6" font-family="Liberation Sans" fill="#555" text-anchor="middle" dominant-baseline="central">d</text>
<text transform="translate(550.5,814) rotate(-90)" font-size="6.6" font-family="Liberation Sans" fill="#555" text-anchor="middle" dominant-baseline="central">d</text>
<text transform="translate(281.7,822.4) rotate(-90)" font-size="6.6" font-family="Liberation Sans" fill="#555" text-anchor="middle" dominant-baseline="central">c</text>
<text transform="translate(550.5,822.4) rotate(-90)" font-size="6.6" font-family="Liberation Sans" fill="#555" text-anchor="middle" dominant-baseline="central">c</text>
<text transform="translate(281.7,831) rotate(-90)" font-size="6.6" font-family="Liberation Sans" fill="#555" text-anchor="middle" dominant-baseline="central">b</text>
<text transform="translate(550.5,831) rotate(-90)" font-size="6.6" font-family="Liberation Sans" fill="#555" text-anchor="middle" dominant-baseline="central">b</text>
<text transform="translate(281.7,839.8) rotate(-90)" font-size="6.6" font-family="Liberation Sans" fill="#555" text-anchor="middle" dominant-baseline="central">a</text>
<text transform="translate(550.5,839.8) rotate(-90)" font-size="6.6" font-family="Liberation Sans" fill="#555" text-anchor="middle" dominant-baseline="central">a</text>
<path d="M385.7,779 V787 M394.3,779 V787 M403,779 V787" stroke="#8a8a8a" stroke-width="1.6"/>
<circle cx="385.7" cy="779.6" r="1.8" fill="#8a8a8a"/><circle cx="394.3" cy="779.6" r="1.8" fill="#8a8a8a"/><circle cx="403" cy="779.6" r="1.8" fill="#8a8a8a"/>
<circle cx="394.3" cy="805" r="20.6" fill="#1f3f5a"/>
<circle cx="394.3" cy="805" r="17" fill="#2b4a66"/>
<circle cx="394.3" cy="805" r="15" fill="#5e96d4"/><circle cx="394.3" cy="805" r="14.6" fill="none" stroke="#2a4a6a" stroke-width="1.2" stroke-dasharray="0.7,0.7"/>
<path d="M395.5,806.5 L405.8,816.3" stroke="#1a3550" stroke-width="3.6" stroke-linecap="round"/>
<circle cx="411.6" cy="812.0" r="0.6" fill="#8fb4d8"/>
<circle cx="401.6" cy="822.2" r="0.6" fill="#8fb4d8"/>
<circle cx="387.3" cy="822.3" r="0.6" fill="#8fb4d8"/>
<circle cx="377.1" cy="812.3" r="0.6" fill="#8fb4d8"/>
<circle cx="377.0" cy="798.0" r="0.6" fill="#8fb4d8"/>
<circle cx="387.0" cy="787.8" r="0.6" fill="#8fb4d8"/>
<circle cx="401.3" cy="787.7" r="0.6" fill="#8fb4d8"/>
<circle cx="411.5" cy="797.7" r="0.6" fill="#8fb4d8"/>
<rect x="645.2" y="736.8" width="26.6" height="29.8" rx="1" fill="#e6e6e6" stroke="#d6d6d6" stroke-width="0.6"/>
<rect x="645.6" y="737.2" width="25.8" height="13.5" fill="#f7f7f7"/>
<rect x="646" y="750.7" width="25" height="2.8" fill="#d9d9d9"/>
<rect x="648.6" y="743.6" width="3.6" height="3.6" fill="#3a7a3a"/><rect x="656.8" y="743.6" width="3.6" height="3.6" fill="#3a7a3a"/><rect x="665" y="743.6" width="3.6" height="3.6" fill="#3a7a3a"/>
<rect x="638.3" y="785.7" width="40.7" height="109.3" rx="3" fill="#333333"/>
<path d="M651.5,767 Q652,776 656,781 Q659,786 658,796" stroke="#b51d1d" stroke-width="2.6" fill="none"/>
<path d="M658,767 Q658,776 656,782 Q654.5,788 656,796" stroke="#ffffff" stroke-width="2.6" fill="none"/>
<path d="M665.5,767 Q665,776 662,782 Q660,787 660.5,792" stroke="#1a1a1a" stroke-width="2.6" fill="none"/>
<path d="M656.5,786 Q658.5,790 657.5,796" stroke="#b51d1d" stroke-width="2.4" fill="none"/>
<rect x="640" y="862" width="37" height="14" fill="#2a2a2a"/>
<text x="658.6" y="872" font-size="6.2" font-family="Liberation Sans" fill="#cfcfcf" text-anchor="middle" textLength="34" lengthAdjust="spacingAndGlyphs">SM-S2309S</text>
<circle cx="645.7" cy="888.7" r="3.4" fill="#fafafa"/>
<circle cx="658.6" cy="888.7" r="3.4" fill="#fafafa"/>
<circle cx="671.5" cy="888.7" r="3.4" fill="#fafafa"/>
<circle cx="671.5" cy="792" r="3.4" fill="#fafafa"/>
<circle cx="658.4" cy="821.4" r="13.2" fill="#8e8e8e"/>
<path d="M667.6,815.9 L645.3,786.1 L633.7,792.9 L649.2,826.9 Z" fill="#8e8e8e"/>
<circle cx="639.5" cy="789.5" r="6.8" fill="#8e8e8e"/>
<path d="M649.0,826.5 L671.1,858.7 L682.9,852.3 L667.8,816.3 Z" fill="#8e8e8e"/>
<circle cx="677.0" cy="855.5" r="6.8" fill="#8e8e8e"/>
<path d="M663.6,830.8 L690.3,811.4 L683.7,799.6 L653.2,812.0 Z" fill="#8e8e8e"/>
<circle cx="687.0" cy="805.5" r="6.8" fill="#8e8e8e"/>
<path d="M653.0,812.1 L627.1,831.7 L633.9,843.3 L663.8,830.7 Z" fill="#8e8e8e"/>
<circle cx="630.5" cy="837.5" r="6.8" fill="#8e8e8e"/>
<circle cx="658.4" cy="821.4" r="12.5" fill="#a9a9a9"/>
<path d="M667.0,816.3 L644.7,786.4 L634.3,792.6 L649.8,826.5 Z" fill="#a9a9a9"/>
<circle cx="639.5" cy="789.5" r="6.0" fill="#a9a9a9"/>
<path d="M649.6,826.2 L671.7,858.4 L682.3,852.6 L667.2,816.6 Z" fill="#a9a9a9"/>
<circle cx="677.0" cy="855.5" r="6.0" fill="#a9a9a9"/>
<path d="M663.3,830.1 L689.9,810.7 L684.1,800.3 L653.5,812.7 Z" fill="#a9a9a9"/>
<circle cx="687.0" cy="805.5" r="6.0" fill="#a9a9a9"/>
<path d="M653.4,812.7 L627.5,832.3 L633.5,842.7 L663.4,830.1 Z" fill="#a9a9a9"/>
<circle cx="630.5" cy="837.5" r="6.0" fill="#a9a9a9"/>
<circle cx="658.4" cy="821.4" r="8" fill="#a8a8a8" stroke="#8f8f8f" stroke-width="1"/><circle cx="658.4" cy="821.4" r="4.2" fill="#8c8c8c"/>
<circle cx="651.6" cy="809.9" r="1.8" fill="#3a3a3a"/>
<circle cx="647.8" cy="803.4" r="1.8" fill="#3a3a3a"/>
<circle cx="643.9" cy="796.9" r="1.8" fill="#f5f5f5"/>
<circle cx="640.1" cy="790.5" r="1.8" fill="#f5f5f5"/>
<circle cx="665.1" cy="833.7" r="1.8" fill="#3a3a3a"/>
<circle cx="667.9" cy="838.9" r="1.8" fill="#3a3a3a"/>
<circle cx="670.8" cy="844.1" r="1.8" fill="#3a3a3a"/>
<circle cx="673.6" cy="849.3" r="1.8" fill="#3a3a3a"/>
<circle cx="676.4" cy="854.5" r="1.8" fill="#f5f5f5"/>
<circle cx="668.7" cy="815.7" r="1.8" fill="#3a3a3a"/>
<circle cx="677.4" cy="810.8" r="1.8" fill="#f5f5f5"/>
<circle cx="686.1" cy="806.0" r="1.8" fill="#f5f5f5"/>
<circle cx="648.4" cy="827.2" r="1.8" fill="#3a3a3a"/>
<circle cx="639.8" cy="832.1" r="1.8" fill="#f5f5f5"/>
<circle cx="631.3" cy="837.0" r="1.8" fill="#f5f5f5"/>
<g stroke="#3dab3d" stroke-width="2.4" fill="none" stroke-linecap="round">
<path d="M204.1,485.3 L667,745.3"/>
<path d="M541,710.4 L658.7,745.3"/>
<path d="M541,719.2 L650.5,745.3"/>
<path d="M209.2,648.7 L437.7,710.4"/>
<path d="M200.3,648.7 L429,719.2"/>
<path d="M243.9,648.7 L394.3,771"/>
<path d="M385.7,719.2 L385.7,771"/>
<path d="M403,710.4 L403,771"/>
</g>
</svg><!--/CIRCUIT-->
<div id="panel" class="abs">
  <div class="abs" style="left:0;top:70px;width:899px;height:1px;background:#dedfe3"></div>
  <div class="sep" style="left:604px;top:0;height:70px;background:#e0e1e5"></div>
  <div class="abs" style="left:615px;top:9px;width:275px;height:49px;border:1px solid #e0e0e3;border-radius:4px;background:#f4f4f6"></div>
  <div class="abs t" style="left:637px;top:22px;font-size:21.4px;color:#3b3f45;letter-spacing:0.73px">1 (Arduino Uno R3)</div>
  <div class="abs" style="left:1px;top:71px;width:54px;height:910px;background:#f7f7f7;border-radius:6px"></div>
  <div class="abs" style="left:55px;top:71px;width:846px;height:910px;background:#e9e9eb"></div>
<div class="abs code" style="left:71px;top:76px"><span class="meta">#include &lt;Servo.h&gt;</span>

<span class="kw">const</span> <span class="kw">int</span> potPin = A0;
<span class="kw">const</span> <span class="kw">int</span> servoPin = <span class="num">9</span>;

Servo myServo;

<span class="kw">void</span> setup() {
  myServo.attach(servoPin);
}

<span class="kw">void</span> loop() {
  <span class="kw">int</span> potValue = analogRead(potPin);
  <span class="kw">int</span> speed = map(potValue, <span class="num">0</span>, <span class="num">1023</span>, <span class="num">0</span>, <span class="num">180</span>);
  myServo.write(speed);
  delay(<span class="num">20</span>);
}</div>
<div class="abs code" style="left:0;top:76px;width:49px;text-align:right;color:#a5a5a5">1
2
3
4
5
6
7
8
9
10
11
12
13
14
15
16
17</div>
  <div class="abs" style="left:0;top:981px;width:899px;height:46px;background:#f0f0f2;border-top:1px solid #e0e1e4;border-bottom:2px solid #e3e4e8"></div>
  <div class="abs t" style="left:59px;top:993px;font-size:20.5px;color:#4a7fb5;letter-spacing:0.87px">Monitor en serie</div>
</div>
<svg class="abs" style="left:0;top:0" width="1600" height="1200" viewBox="0 0 1600 1200">
<!-- status icons -->
<g fill="#000">
<path d="M1448,12.3 A14,14 0 0 1 1467.5,12.3 L1465.8,14.1 A11.5,11.5 0 0 0 1449.7,14.1 Z"/>
<path d="M1451.2,15.6 A9.5,9.5 0 0 1 1464.3,15.6 L1462.5,17.4 A7,7 0 0 0 1453,17.4 Z"/>
<path d="M1454.4,18.9 A4.6,4.6 0 0 1 1461.1,18.9 L1457.75,21.8 Z"/>
<circle cx="1482" cy="14.5" r="6.2"/>
<path d="M1475.5,11 A3,3 0 0 1 1479,7.5 Z M1488.5,11 A3,3 0 0 0 1485,7.5 Z" />
<path d="M1477,19.5 L1475.5,21.3 M1487,19.5 L1488.5,21.3" stroke="#000" stroke-width="1.3"/>
<path d="M1482,11 V15 H1479" stroke="#fff" stroke-width="1.3" fill="none"/>
<mask id="moonm"><rect x="1490" y="0" width="30" height="30" fill="#fff"/><circle cx="1509.2" cy="10.6" r="5.6" fill="#000"/></mask><circle cx="1504.6" cy="14.6" r="6.6" mask="url(#moonm)"/>
</g>
<text x="1520" y="20.5" font-size="16.8" font-family="Liberation Sans" fill="#000" stroke="#000" stroke-width="0.3" letter-spacing="0.4">7%</text>
<rect x="1554" y="7" width="34" height="16" rx="4" fill="none" stroke="#a8a8a8" stroke-width="1.4"/>
<rect x="1556.3" y="10" width="3" height="10" rx="1" fill="#f2c81c"/>
<path d="M1590,12 A3,3 0 0 1 1590,18 Z" fill="#a8a8a8"/>
<!-- header tab icons -->
<g fill="#fff">
<rect x="1330" y="50" width="18.5" height="30" rx="2"/>
<rect x="1325.6" y="53.2" width="3.4" height="5" rx="0.6"/>
<rect x="1325.6" y="62.4" width="3.4" height="5" rx="0.6"/>
<rect x="1325.6" y="71.2" width="3.4" height="5" rx="0.6"/>
<rect x="1349.6" y="53.2" width="3.4" height="5" rx="0.6"/>
<rect x="1349.6" y="62.4" width="3.4" height="5" rx="0.6"/>
<rect x="1349.6" y="71.2" width="3.4" height="5" rx="0.6"/>
</g>
<path d="M1336.2,50.5 A3,2.5 0 0 0 1342.2,50.5 Z" fill="#0e96d8"/>
<g stroke="#3c4a5c" fill="none">
<rect x="1405.8" y="51.5" width="14.5" height="27" stroke-width="3"/>
<path d="M1398,56.5 H1405 M1398,65 H1405 M1398,73.8 H1405 M1421,56.5 H1428 M1421,65 H1428 M1421,73.8 H1428" stroke-width="2.6"/>
</g>
<rect x="1472" y="53.6" width="33" height="24.5" fill="#3c4a5c"/>
<g fill="#fff">
<rect x="1474.5" y="61.2" width="6.2" height="4"/>
<rect x="1482.3" y="61.2" width="20.2" height="4"/>
<rect x="1474.5" y="67" width="6.2" height="3.8"/>
<rect x="1482.3" y="67" width="20.2" height="3.8"/>
<rect x="1474.5" y="72.5" width="6.2" height="3.8"/>
<rect x="1482.3" y="72.5" width="20.2" height="3.8"/>
</g>
<defs><clipPath id="av"><circle cx="1563" cy="67" r="33"/></clipPath></defs>
<g clip-path="url(#av)">
<circle cx="1563" cy="67" r="33" fill="#4a86d8"/>
<circle cx="1563" cy="59" r="15" fill="#e8edf6"/>
<ellipse cx="1563" cy="101" rx="19.5" ry="23" fill="#e8edf6"/>
</g>
<!-- toolbar icons -->
<g fill="none" stroke="#c9d0d8" stroke-width="1.8">
<path d="M27.5,144 H18.5 V119.5 H43.5 V128"/>
<rect x="27.8" y="128.3" width="24.7" height="24.8"/>
<path d="M113,148.3 V153 H89.6 V122.6 H95.5 M107,122.6 H113 V131.5"/>
<rect x="103.8" y="131.6" width="16.6" height="16.4"/>
</g>
<path d="M95.2,121 H107.2 V126.8 H95.2 Z M98.5,121 A2.7,2.7 0 0 1 103.9,121 Z" fill="#c9d0d8"/>
<g fill="none" stroke="#c7ced7" stroke-linecap="round">
<path d="M163,122 H192.5" stroke-width="3.2"/>
<path d="M173,120.5 V118.5 A2.5,2.5 0 0 1 175.5,116 H180.5 A2.5,2.5 0 0 1 183,118.5 V120.5" stroke-width="2"/>
<path d="M165,126 V149 A5,5 0 0 0 170,154 H185.5 A5,5 0 0 0 190.5,149 V126" stroke-width="3.2"/>
<path d="M171.3,128 V145 M177.7,128 V145 M184,128 V145" stroke-width="1.6"/>
</g>
<path d="M235.5,135.5 L248.6,126.1 V133.3 C258,133.3 266.6,136 266.6,144.5 C263,140 257,137.8 248.6,137.8 V144.9 Z" fill="#34465a"/>
<path d="M336.4,135.5 L323.3,126.1 V133.3 C313.9,133.3 305.1,136 305.1,144.5 C308.9,140 314.9,137.8 323.3,137.8 V144.9 Z" fill="#c5cfd9"/>
<g fill="none" stroke="#34465a" stroke-width="2.2" stroke-linejoin="round" stroke-linecap="round">
<path d="M382.5,119.5 H406 A5,5 0 0 1 411,124.5 V146.5 A5,5 0 0 1 406,151.5 H400 L394.2,158 L388.4,151.5 H382.5 A5,5 0 0 1 377.5,146.5 V124.5 A5,5 0 0 1 382.5,119.5 Z"/>
<path d="M386,128.2 H402.5 M386,135.4 H398.5 M386,142.5 H402.5" stroke-width="3"/>
<path d="M453.5,119.5 H477 A5,5 0 0 1 482,124.5 V146.5 A5,5 0 0 1 477,151.5 H471 L465.2,158 L459.4,151.5 H453.5 A5,5 0 0 1 448.5,146.5 V124.5 A5,5 0 0 1 453.5,119.5 Z"/>
</g>
<path d="M452.7,135.3 Q465,119.5 477.5,135.3 Q465,151 452.7,135.3 Z" fill="#34465a"/>
<circle cx="465.1" cy="135.3" r="5.3" fill="#f3f4f6"/>
<path d="M581.5,134.5 H592 L586.75,140.5 Z" fill="#34465a"/>
<rect x="629" y="132" width="27" height="6" fill="#3fb94a"/>
<rect x="658.5" y="132.5" width="7" height="5" rx="1" fill="#3fb94a"/>
<path d="M689.5,134.5 H700 L694.75,140.5 Z" fill="#34465a"/>
<g fill="none" stroke="#c8d0da" stroke-linejoin="round" stroke-linecap="round">
<path d="M767,123.8 L747.9,140 L756.4,150.6 Z" stroke-width="3"/>
<path d="M744,147.5 C739.5,142 740.5,133 747,128.5" stroke-width="2.4"/>
<path d="M744.5,127.2 H749.2 V131.5" stroke-width="2.4"/>
<path d="M828.1,115.5 V157.5" stroke-width="3.2"/>
<path d="M821.4,123.2 V149 H806.8 Z" stroke-width="1.6"/>
<path d="M835.4,123.5 V148.8 H848.8 Z" stroke-width="3"/>
</g>
<!-- codigo icon -->
<g fill="none" stroke="#fff" stroke-width="2">
<rect x="1091.3" y="125.4" width="31" height="21.4" rx="1"/>
<path d="M1091.3,130.5 H1122.3" stroke-width="1.6"/>
<path d="M1104,135 L1098,139.2 L1104,143.5" stroke-width="2.4" stroke-linecap="round"/>
<path d="M1114,134.5 L1109.5,144" stroke-width="2.4" stroke-linecap="round"/>
</g>
<g fill="#fff"><circle cx="1094.5" cy="128.2" r="1"/><circle cx="1097.8" cy="128.2" r="1"/><circle cx="1101.1" cy="128.2" r="1"/></g>
<!-- panel icons -->
<rect x="1185" y="197.9" width="4.7" height="18.7" rx="2.3" fill="#8e97a3"/>
<path d="M1194,199.5 Q1194,197 1196.5,198.4 L1208.8,206.2 Q1209.8,207 1208.8,207.8 L1196.5,215.6 Q1194,217.4 1194,214.5 Z" fill="#8e97a3"/>
<path d="M1249,206 A15,13 0 0 1 1274.5,203.5" fill="none" stroke="#8e97a3" stroke-width="3" stroke-linecap="round"/>
<path d="M1268.5,206.5 L1275,208.3 L1276.3,202.5" fill="none" stroke="#8e97a3" stroke-width="3" stroke-linecap="round" stroke-linejoin="round"/>
<circle cx="1261.3" cy="212.3" r="5.2" fill="#8e97a3"/>
<path d="M1553.5,205 H1565.5 L1559.5,212 Z" fill="#000"/>
<!-- serial monitor -->
<rect x="714.9" y="1164.9" width="32.2" height="22.6" rx="2" fill="none" stroke="#000" stroke-width="1.4"/>
<path d="M714.2,1169.9 V1166.5 A2.3,2.3 0 0 1 716.5,1164.2 H745.5 A2.3,2.3 0 0 1 747.8,1166.5 V1169.9 Z" fill="#000"/>
<g fill="#fff"><circle cx="718.4" cy="1167.4" r="1.15"/><circle cx="722.8" cy="1167.4" r="1.15"/><circle cx="727.2" cy="1167.4" r="1.15"/></g>
<path d="M735.6,1169.5 V1187.2" stroke="#000" stroke-width="1.1"/>
<path d="M735.6,1181.4 H747" stroke="#000" stroke-width="1"/>
<path d="M738.3,1184.3 H744" stroke="#000" stroke-width="1.1"/>
<path d="M1550,1177 H1561 L1555.5,1170 Z" fill="#000"/>
<!-- fullscreen button -->
<circle cx="35.5" cy="208.5" r="23" fill="#f6f7f9" stroke="#a9a9ab" stroke-width="1.3"/>
<path d="M25.3,205 V198.9 H31.3 M40,198.9 H45.9 V205 M45.9,213 V219 H40 M31.3,219 H25.3 V213" fill="none" stroke="#9a9a9c" stroke-width="1.3"/>
</svg>
</body></html>
